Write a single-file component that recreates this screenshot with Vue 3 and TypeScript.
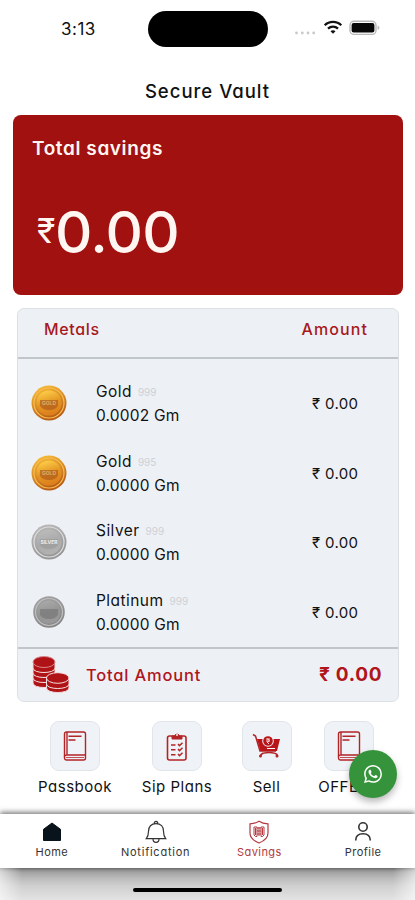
<script setup lang="ts">
interface Metal {
  name: string
  purity: string
  weight: string
  amount: string
  tone: 'gold' | 'silver' | 'platinum'
  mark: string
}

const metals: Metal[] = [
  { name: 'Gold', purity: '999', weight: '0.0002 Gm', amount: '₹ 0.00', tone: 'gold', mark: 'GOLD' },
  { name: 'Gold', purity: '995', weight: '0.0000 Gm', amount: '₹ 0.00', tone: 'gold', mark: 'GOLD' },
  { name: 'Silver', purity: '999', weight: '0.0000 Gm', amount: '₹ 0.00', tone: 'silver', mark: 'SILVER' },
  { name: 'Platinum', purity: '999', weight: '0.0000 Gm', amount: '₹ 0.00', tone: 'platinum', mark: '' },
]

const actions = [
  { label: 'Passbook', icon: 'book', key: 'passbook' },
  { label: 'Sip Plans', icon: 'clipboard', key: 'sip' },
  { label: 'Sell', icon: 'cart', key: 'sell' },
  { label: 'OFFERS', icon: 'book', key: 'offers' },
]

const tabs = [
  { label: 'Home', key: 'home' },
  { label: 'Notification', key: 'notification' },
  { label: 'Savings', key: 'vault' },
  { label: 'Profile', key: 'profile' },
]
</script>

<template>
  <div class="screen">
    <header class="status">
      <span class="time">3:13</span>
      <span class="island"></span>
      <span class="signals">
        <svg class="dots" width="22" height="4" viewBox="0 0 22 4">
          <g fill="#c9c9c9"><circle cx="2.5" cy="2" r="1.4" /><circle cx="8.3" cy="2" r="1.4" /><circle cx="14" cy="2" r="1.4" /><circle cx="19.7" cy="2" r="1.4" /></g>
        </svg>
        <svg class="wifi" width="20" height="15" viewBox="0 0 20 15">
          <g fill="none" stroke="#111" stroke-width="2.3">
            <path d="M1.7 5.3C6.2.8 13.8.8 18.3 5.3" />
            <path d="M5 8.7c2.9-2.8 7.1-2.8 10 0" />
          </g>
          <path d="M7.5 11.2c1.5-1.3 3.5-1.3 5 0L10 13.8z" fill="#111" />
        </svg>
        <svg class="battery" width="32" height="16" viewBox="0 0 32 16">
          <rect x="1" y="1.2" width="26" height="13.2" rx="4" fill="#fff" stroke="#b9b9b9" stroke-width="1.4" />
          <rect x="2.6" y="3" width="22.8" height="9.6" rx="2" fill="#080808" />
          <path d="M28.6 5.6c2.4.8 2.4 3.5 0 4.3z" fill="#b9b9b9" />
        </svg>
      </span>
    </header>

    <h1 class="title">Secure Vault</h1>

    <section class="savings">
      <h2>Total savings</h2>
      <div class="balance"><span class="rupee">₹</span><span class="value">0.00</span></div>
    </section>

    <section class="table">
      <div class="head"><span class="h-metals">Metals</span><span class="h-amount">Amount</span></div>
      <div class="rows">
        <div v-for="(m, i) in metals" :key="i" class="row">
          <svg class="coin" :class="m.tone" width="36" height="36" viewBox="0 0 36 36">
            <defs>
              <linearGradient :id="'rim' + i" x1="0" y1="0" x2="0.4" y2="1">
                <stop offset="0" class="rim-a" /><stop offset="1" class="rim-b" />
              </linearGradient>
              <linearGradient :id="'face' + i" x1="0.2" y1="0" x2="0.5" y2="1">
                <stop offset="0" class="face-a" /><stop offset="0.55" class="face-b" /><stop offset="1" class="face-c" />
              </linearGradient>
            </defs>
            <circle cx="18" cy="18" :r="m.tone === 'platinum' ? 15.8 : 17.5" :fill="`url(#rim${i})`" />
            <circle class="ring" cx="18" cy="18" :r="m.tone === 'platinum' ? 13.5 : 15" />
            <circle cx="18" cy="18" :r="m.tone === 'platinum' ? 11.5 : 12.6" :fill="`url(#face${i})`" />
            <path class="band" d="M9 15h18v5.500c-2 3.500-5 4.500-9 4.500s-7-1-9-4.500z" />
            <text x="18" y="19.500" text-anchor="middle" class="mark">{{ m.mark }}</text>
          </svg>
          <div class="info">
            <div class="name">{{ m.name }}<span class="purity">{{ m.purity }}</span></div>
            <div class="weight">{{ m.weight }}</div>
          </div>
          <span class="amount">{{ m.amount }}</span>
        </div>
      </div>
      <div class="foot">
        <svg class="stack" width="38" height="38" viewBox="0 0 38 38">
          <g fill="#b01316" stroke="#f4dfe1" stroke-width="1">
            <path d="M1 22v5c0 6 22 6 22 0v-5z" />
            <path d="M1 17v5c0 6 22 6 22 0v-5z" />
            <path d="M1 12v5c0 6 22 6 22 0v-5z" />
            <path d="M1 6v6c0 6 22 6 22 0V6z" />
            <ellipse cx="12" cy="6" rx="11" ry="5.500" stroke="#d9868a" />
            <path d="M14.500 28v4c0 6 22.500 6 22.500 0v-4z" />
            <path d="M14.500 22v6c0 6 22.500 6 22.500 0v-6z" />
            <ellipse cx="25.700" cy="22" rx="11.300" ry="5.300" />
          </g>
        </svg>
        <span class="total">Total Amount</span>
        <span class="sum">₹ 0.00</span>
      </div>
    </section>

    <section class="actions">
      <div v-for="a in actions" :key="a.key" class="action" :class="a.key">
        <div class="tile">
          <svg v-if="a.icon === 'book'" width="24" height="30" viewBox="0 0 24 30">
            <g fill="none" stroke="#b32427" stroke-width="1.4">
              <rect x="1.500" y="1" width="21" height="28" rx="2" />
              <path d="M4 1v23M1.500 25.500c0-1 1-1.500 2-1.500h19" />
              <path d="M3 26.500h18" stroke-width=".8" />
              <path d="M5.500 5.300H18.500M5.500 9h7" stroke-width="1.600" />
            </g>
          </svg>
          <svg v-else-if="a.icon === 'clipboard'" width="22" height="30" viewBox="0 0 22 30">
            <rect x="1.500" y="5" width="18.500" height="24" rx="2" fill="none" stroke="#b32427" stroke-width="1.600" />
            <path d="M6 8V5h2.500a2.600 2.600 0 0 1 5 0H16v3z" fill="#b32427" stroke="#b32427" />
            <circle cx="11" cy="4" r=".9" fill="#fff" />
            <path d="M5 14h4.500M5 18.700h4.500M5 23.700h4.500M12 13l1.500 1.700 3-3M12 18l1.500 1.700 3-3M12 23l1.500 1.700 3-3" fill="none" stroke="#b32427" stroke-width="1.500" />
          </svg>
          <svg v-else width="30" height="26" viewBox="0 0 30 26">
            <path d="M1 1.500 3.500 3l4.500 15h16" fill="none" stroke="#b32427" stroke-width="1.500" />
            <path d="M5 6h23l-3 12H8.500z" fill="#b91519" />
            <circle cx="16" cy="8" r="5.800" fill="#eff3f7" />
            <circle cx="16" cy="8" r="4.800" fill="#b91519" />
            <path d="M14 6h4M14 8h4M15 6c3 0 3 3 0 3l2 2" fill="none" stroke="#fff" stroke-width=".8" />
            <path d="M15 15.500h8" stroke="#fff" />
            <path d="M8.500 22c3-3.500 14-3.500 17 0M11 20l-2 2" fill="none" stroke="#b32427" stroke-width="1.500" />
            <circle cx="8.500" cy="23" r="1.500" fill="#b32427" /><circle cx="25" cy="23" r="1.500" fill="#b32427" />
          </svg>
        </div>
        <span class="caption">{{ a.label }}</span>
      </div>
    </section>

    <button class="chat" aria-label="Chat">
      <svg width="18" height="18" viewBox="0 0 24 24" fill="#fff">
        <path d="M17.472 14.382c-.297-.149-1.758-.867-2.030-.967-.273-.099-.471-.148-.670.150-.197.297-.767.966-.940 1.164-.173.199-.347.223-.644.075-.297-.150-1.255-.463-2.390-1.475-.883-.788-1.480-1.761-1.653-2.059-.173-.297-.018-.458.130-.606.134-.133.298-.347.446-.520.149-.174.198-.298.298-.497.099-.198.050-.371-.025-.520-.075-.149-.669-1.612-.916-2.207-.242-.579-.487-.500-.669-.510-.173-.008-.371-.010-.570-.010-.198 0-.520.074-.792.372-.272.297-1.040 1.016-1.040 2.479 0 1.462 1.065 2.875 1.213 3.074.149.198 2.096 3.200 5.077 4.487.709.306 1.262.489 1.694.625.712.227 1.360.195 1.871.118.571-.085 1.758-.719 2.006-1.413.248-.694.248-1.289.173-1.413-.074-.124-.272-.198-.570-.347m-5.421 7.403h-.004a9.870 9.870 0 0 1-5.031-1.378l-.361-.214-3.741.982.998-3.648-.235-.374a9.860 9.860 0 0 1-1.510-5.260c.001-5.450 4.436-9.884 9.888-9.884a9.880 9.880 0 0 1 9.885 9.891c-.003 5.450-4.437 9.885-9.889 9.885M20.465 3.488A11.820 11.820 0 0 0 12.050 0C5.495 0 .160 5.335.157 11.892c0 2.096.547 4.142 1.588 5.945L.057 24l6.305-1.654a11.880 11.880 0 0 0 5.683 1.448h.005c6.554 0 11.890-5.335 11.893-11.893a11.820 11.820 0 0 0-3.478-8.413" />
      </svg>
    </button>

    <nav class="tabs">
      <div v-for="t in tabs" :key="t.key" class="tab" :class="t.key">
        <svg v-if="t.key === 'home'" width="24" height="24" viewBox="0 0 24 24"><path d="M12 3 20.500 9.300V20.500h-17V9.300z" fill="#09131c" stroke="#09131c" stroke-linejoin="round" /></svg>
        <svg v-else-if="t.key === 'notification'" width="24" height="24" viewBox="0 0 24 24">
          <path d="M2.300 18.700c1.700-2 2.200-3.500 2.200-7.500 0-4.500 2.700-7.500 7.500-7.500s7.500 3 7.500 7.500c0 4 .5 5.500 2.200 7.500zM10.200 3.500C10.200.700 13.800.700 13.800 3.500M9 19c0 4.500 6 4.500 6 0" fill="none" stroke="#333" stroke-width="1.200" />
        </svg>
        <svg v-else-if="t.key === 'vault'" width="24" height="24" viewBox="0 0 24 24">
          <g fill="none" stroke="#b33a40" stroke-width="1.200">
            <path d="M12 1.200c3 2 5.500 2.500 9 2.600V13c0 5-4 8-9 10-5-2-9-5-9-10V3.800c3.500-.1 6-.6 9-2.600z" />
            <path d="M7 7h3v9.500H8.500L7 15zM17 7h-3v9.500h1.500L17 15zM10 8h4M10 11h4M10 14h4M12 7v9M8.500 8v7M15.500 8v7" stroke-width="1" />
          </g>
        </svg>
        <svg v-else width="24" height="24" viewBox="0 0 24 24">
          <g fill="none" stroke="#333" stroke-width="1.600"><circle cx="12" cy="7" r="4.200" /><path d="M4.700 20.500c0-4.500 3-6.700 7.300-6.700s7.300 2.200 7.300 6.700" /></g>
        </svg>
        <span>{{ t.label }}</span>
      </div>
    </nav>
    <footer class="bottom"><span class="indicator"></span></footer>
  </div>
</template>

<style>
body {
  margin: 0;
  background: #fff;
}
</style>

<style scoped>
.screen {
  position: relative;
  box-sizing: border-box;
  width: 415px;
  height: 900px;
  overflow: hidden;
  display: flex;
  flex-direction: column;
  background: #fff;
  color: #111;
  font-family: Inter, 'Liberation Sans', sans-serif;
  font-feature-settings: 'cv11';
  white-space: nowrap;
}
.status {
  height: 58px;
  display: grid;
  grid-template-columns: 148px 120px 1fr;
  flex: none;
}
.time {
  padding: 19px 0 0 61px;
  font-size: 17px;
  line-height: 20px;
  font-weight: 400;
  letter-spacing: 0.5px;
}
.island {
  margin-top: 11px;
  height: 36px;
  border-radius: 18px;
  background: #000;
}
.signals {
  display: flex;
  align-items: flex-start;
  padding-left: 26px;
}
.dots { margin-top: 31px; }
.wifi { margin: 20px 0 0 7px; }
.battery { margin: 20px 0 0 6px; }
.title {
  margin: 20px 0 0;
  height: 37px;
  text-align: center;
  font-size: 18.5px;
  line-height: 26px;
  font-weight: 500;
  letter-spacing: 1px;
}
.savings {
  margin: 0 12px 0 13px;
  height: 180px;
  flex: none;
  box-sizing: border-box;
  border-radius: 8px;
  background: #a01110;
  color: #fff6f2;
  padding: 20px 19px;
}
.savings h2 {
  margin: 0;
  font-size: 19px;
  line-height: 27px;
  font-weight: 600;
  letter-spacing: 0.6px;
}
.balance {
  display: flex;
  align-items: flex-start;
  padding: 36px 0 0 5px;
}
.rupee {
  margin-top: 13px;
  font-size: 34px;
  line-height: 40px;
  width: 18px;
}
.value {
  font-size: 58px;
  line-height: 69px;
  font-weight: 500;
  letter-spacing: -0.7px;
}
.table {
  margin: 13px 16px 0 17px;
  height: 394px;
  flex: none;
  box-sizing: border-box;
  border: 1px solid #dbe0e4;
  border-radius: 7px;
  background: #edf1f6;
  display: flex;
  flex-direction: column;
}
.head {
  height: 48px;
  border-bottom: 2px solid #c0c6ca;
  display: flex;
  justify-content: space-between;
  padding: 0 30px 0 26px;
  line-height: 41px;
  font-size: 16px;
  font-weight: 500;
  color: #a71920;
}
.h-metals { letter-spacing: 0.65px; }
.h-amount { letter-spacing: 1.1px; }
.rows {
  flex: 1;
  padding-top: 10px;
}
.row {
  height: 69.500px;
  display: flex;
  align-items: center;
}
.coin { margin-left: 13px; }
.info {
  margin-left: 29px;
  padding-top: 1px;
  width: 216px;
  font-size: 15.500px;
  line-height: 23px;
}
.name { letter-spacing: 0.45px; }
.weight { letter-spacing: 0.2px; }
.purity {
  margin-left: 6px;
  font-size: 10px;
  letter-spacing: 0;
  color: #ccd0d5;
  vertical-align: 1px;
}
.amount {
  padding-top: 1px;
  font-size: 15px;
  letter-spacing: 0.35px;
}
.gold { --rim-a: #ffc63b; --rim-b: #b85c16; --face-a: #ffd34d; --face-b: #e39422; --face-c: #dc7f1b; --ring: #f8bd50; --band: #a9541a; }
.silver { --rim-a: #bcbcbc; --rim-b: #969696; --face-a: #bdbdbd; --face-b: #aaa; --face-c: #b2b2b2; --ring: #dedede; --band: #989898; }
.platinum { --rim-a: #a5a5a5; --rim-b: #868686; --face-a: #aaa; --face-b: #959595; --face-c: #999; --ring: #bebebe; --band: #737373; }
.rim-a { stop-color: var(--rim-a); }
.rim-b { stop-color: var(--rim-b); }
.face-a { stop-color: var(--face-a); }
.face-b { stop-color: var(--face-b); }
.face-c { stop-color: var(--face-c); }
.ring { fill: none; stroke: var(--ring); stroke-width: 1.200; }
.band { fill: var(--band); opacity: 0.6; }
.mark { font-size: 5px; font-weight: 700; fill: #d9ae68; }
.silver .mark { fill: #eee; }
.foot {
  height: 53px;
  border-top: 2px solid #c0c6ca;
  display: flex;
  align-items: center;
  color: #b0151b;
}
.stack { margin-left: 14px; }
.total {
  margin-left: 16px;
  width: 233px;
  font-size: 16.500px;
  font-weight: 500;
  letter-spacing: 0.8px;
}
.sum {
  font-size: 19px;
  font-weight: 700;
  letter-spacing: 0.7px;
}
.actions {
  display: flex;
  gap: 30px;
  padding: 19px 0 0 38px;
  height: 106px;
  box-sizing: border-box;
  flex: none;
}
.action {
  display: flex;
  flex-direction: column;
  align-items: center;
}
.passbook { width: 74px; }
.sip { width: 70px; }
.sell { width: 49px; }
.offers { width: 55px; }
.tile {
  width: 50px;
  height: 50px;
  flex: none;
  box-sizing: border-box;
  border: 1px solid #e1e5e9;
  border-radius: 9px;
  background: #eff3f7;
  display: flex;
  align-items: center;
  justify-content: center;
}
.caption {
  margin-top: 5px;
  font-size: 15px;
  line-height: 22px;
  letter-spacing: 0.5px;
}
.chat {
  position: absolute;
  left: 349px;
  top: 750px;
  width: 48px;
  height: 48px;
  padding: 0;
  border: 0;
  border-radius: 50%;
  background: #35933b;
  box-shadow: 0 4px 7px rgba(0, 0, 0, 0.28);
  display: flex;
  align-items: center;
  justify-content: center;
}
.tabs {
  position: relative;
  margin-top: 6px;
  height: 54px;
  flex: none;
  background: #fff;
  display: grid;
  grid-template-columns: repeat(4, 1fr);
  box-shadow: 0 -2px 5px rgba(0, 0, 0, 0.5);
}
.tab {
  display: flex;
  flex-direction: column;
  align-items: center;
  padding-top: 6px;
  font-size: 11px;
  line-height: 16px;
  letter-spacing: 0.45px;
  color: #333;
}
.tab.notification { letter-spacing: 0.75px; }
.tab.vault { color: #b33a40; }
.bottom {
  flex: 1;
  display: flex;
  justify-content: center;
  align-items: flex-start;
  background:
    linear-gradient(90deg, rgba(255, 255, 255, 0.6), transparent 22px, transparent 393px, rgba(255, 255, 255, 0.6)),
    linear-gradient(#777 0, #a2a2a2 4px, #bababa 10px, #d0d0d0 18px, #e3e3e3 32px);
}
.indicator {
  margin-top: 20px;
  width: 149px;
  height: 4px;
  border-radius: 2px;
  background: #000;
}
</style>
